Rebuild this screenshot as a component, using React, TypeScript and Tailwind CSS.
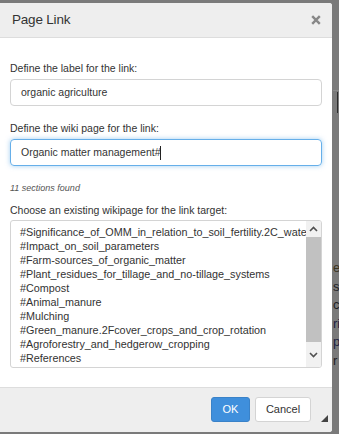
import React from 'react';

const sections = [
  '#Significance_of_OMM_in_relation_to_soil_fertility.2C_water_and_nutrient_management',
  '#Impact_on_soil_parameters',
  '#Farm-sources_of_organic_matter',
  '#Plant_residues_for_tillage_and_no-tillage_systems',
  '#Compost',
  '#Animal_manure',
  '#Mulching',
  '#Green_manure.2Fcover_crops_and_crop_rotation',
  '#Agroforestry_and_hedgerow_cropping',
  '#References',
];

const behind = ['el', 's', 'cl', 'ri', 'pr', 'r'];

export default function App() {
  return (
    <div
      className="relative w-[339px] h-[434px] overflow-hidden bg-[#7a7a7a]"
      style={{ fontFamily: '"Liberation Sans", Arial, sans-serif' }}
    >
      {/* page content behind the overlay */}
      <div className="absolute left-[333px] top-[90px] w-[6px] h-px bg-[#8a8a8a]" />
      <div className="absolute left-[337px] top-[92px] w-px h-[21px] bg-[#2a2a2a]" />
      <div className="absolute left-[333px] top-[259px] w-[6px] overflow-hidden flex flex-col text-[13px] leading-[18.5px] text-[#1e1e24]">
        {behind.map((t, i) => (
          <span key={i} className={i === 0 ? 'text-[#3a3320]' : i === 3 || i === 4 ? 'text-[#1c2040]' : ''}>
            {t}
          </span>
        ))}
      </div>

      {/* dialog */}
      <div className="absolute left-0 top-[3px] w-[332px] h-[429px] flex flex-col bg-white rounded-r-[3px] overflow-hidden">
        <div className="h-[35px] shrink-0 flex items-center justify-between pl-[12px] pr-[10px] bg-[#eeeeee] border-b border-[#dddddd]">
          <span className="text-[13.5px] text-[#333333] tracking-[-0.2px]">Page Link</span>
          <svg width="10" height="10" viewBox="0 0 10 10" className="mr-[1px]">
            <path d="M1.2 1.2 L8.8 8.8 M8.8 1.2 L1.2 8.8" stroke="#888888" strokeWidth="2.4" strokeLinecap="butt" />
          </svg>
        </div>

        <div className="flex-1 flex flex-col px-[10px] pt-[24px] text-[#333333]">
          <label className="text-[10.5px] leading-[13px]">Define the label for the link:</label>
          <div className="mt-[4px] h-[27px] flex items-center px-[10px] border border-[#d4d4d4] rounded-[4px] text-[10.5px]">
            organic agriculture
          </div>

          <label className="mt-[16px] text-[10.5px] leading-[13px]">Define the wiki page for the link:</label>
          <div className="mt-[4px] h-[27px] flex items-center px-[10px] border border-[#66afe9] rounded-[4px] text-[10.5px] shadow-[0_0_5px_rgba(102,175,233,0.6)]">
            Organic matter management#
            <span className="inline-block w-px h-[14px] bg-[#222222]" />
          </div>

          <div className="mt-[16px] text-[9px] italic text-[#555555] leading-[12px]">11 sections found</div>

          <label className="mt-[10px] text-[10.5px] leading-[13px]">Choose an existing wikipage for the link target:</label>
          <div className="mt-[3px] h-[148px] flex border border-[#d4d4d4] rounded-[3px] overflow-hidden">
            <div className="flex-1 min-w-0 pl-[9px] pt-[4px] overflow-hidden">
              {sections.map((s) => (
                <div key={s} className="whitespace-nowrap text-[10.8px] leading-[14px]">
                  {s}
                </div>
              ))}
            </div>
            <div className="w-[15px] shrink-0 flex flex-col bg-[#f1f1f1]">
              <div className="h-[16px] flex items-center justify-center">
                <svg width="9" height="6" viewBox="0 0 9 6">
                  <path d="M1 5 L4.5 1.5 L8 5" fill="none" stroke="#505050" strokeWidth="1.6" />
                </svg>
              </div>
              <div className="h-[105px] bg-[#c1c1c1]" />
              <div className="flex-1 flex items-center justify-center">
                <svg width="9" height="6" viewBox="0 0 9 6">
                  <path d="M1 1 L4.5 4.5 L8 1" fill="none" stroke="#505050" strokeWidth="1.6" />
                </svg>
              </div>
            </div>
          </div>
        </div>

        <div className="h-[45px] shrink-0 relative flex items-center justify-end gap-[5px] pr-[21px] pb-[1px] bg-[#eeeeee] border-t border-[#dddddd]">
          <button className="w-[39px] h-[25px] rounded-[3px] bg-[#3f8fdc] border border-[#3a82c8] text-white text-[11px]">
            OK
          </button>
          <button className="w-[56px] h-[25px] rounded-[3px] bg-white border border-[#d4d4d4] text-[#333333] text-[11px]">
            Cancel
          </button>
          <svg width="7" height="7" viewBox="0 0 7 7" className="absolute right-[4px] bottom-[10px]">
            <path d="M7 0 L7 7 L0 7 Z" fill="#444444" />
          </svg>
        </div>
      </div>
    </div>
  );
}
